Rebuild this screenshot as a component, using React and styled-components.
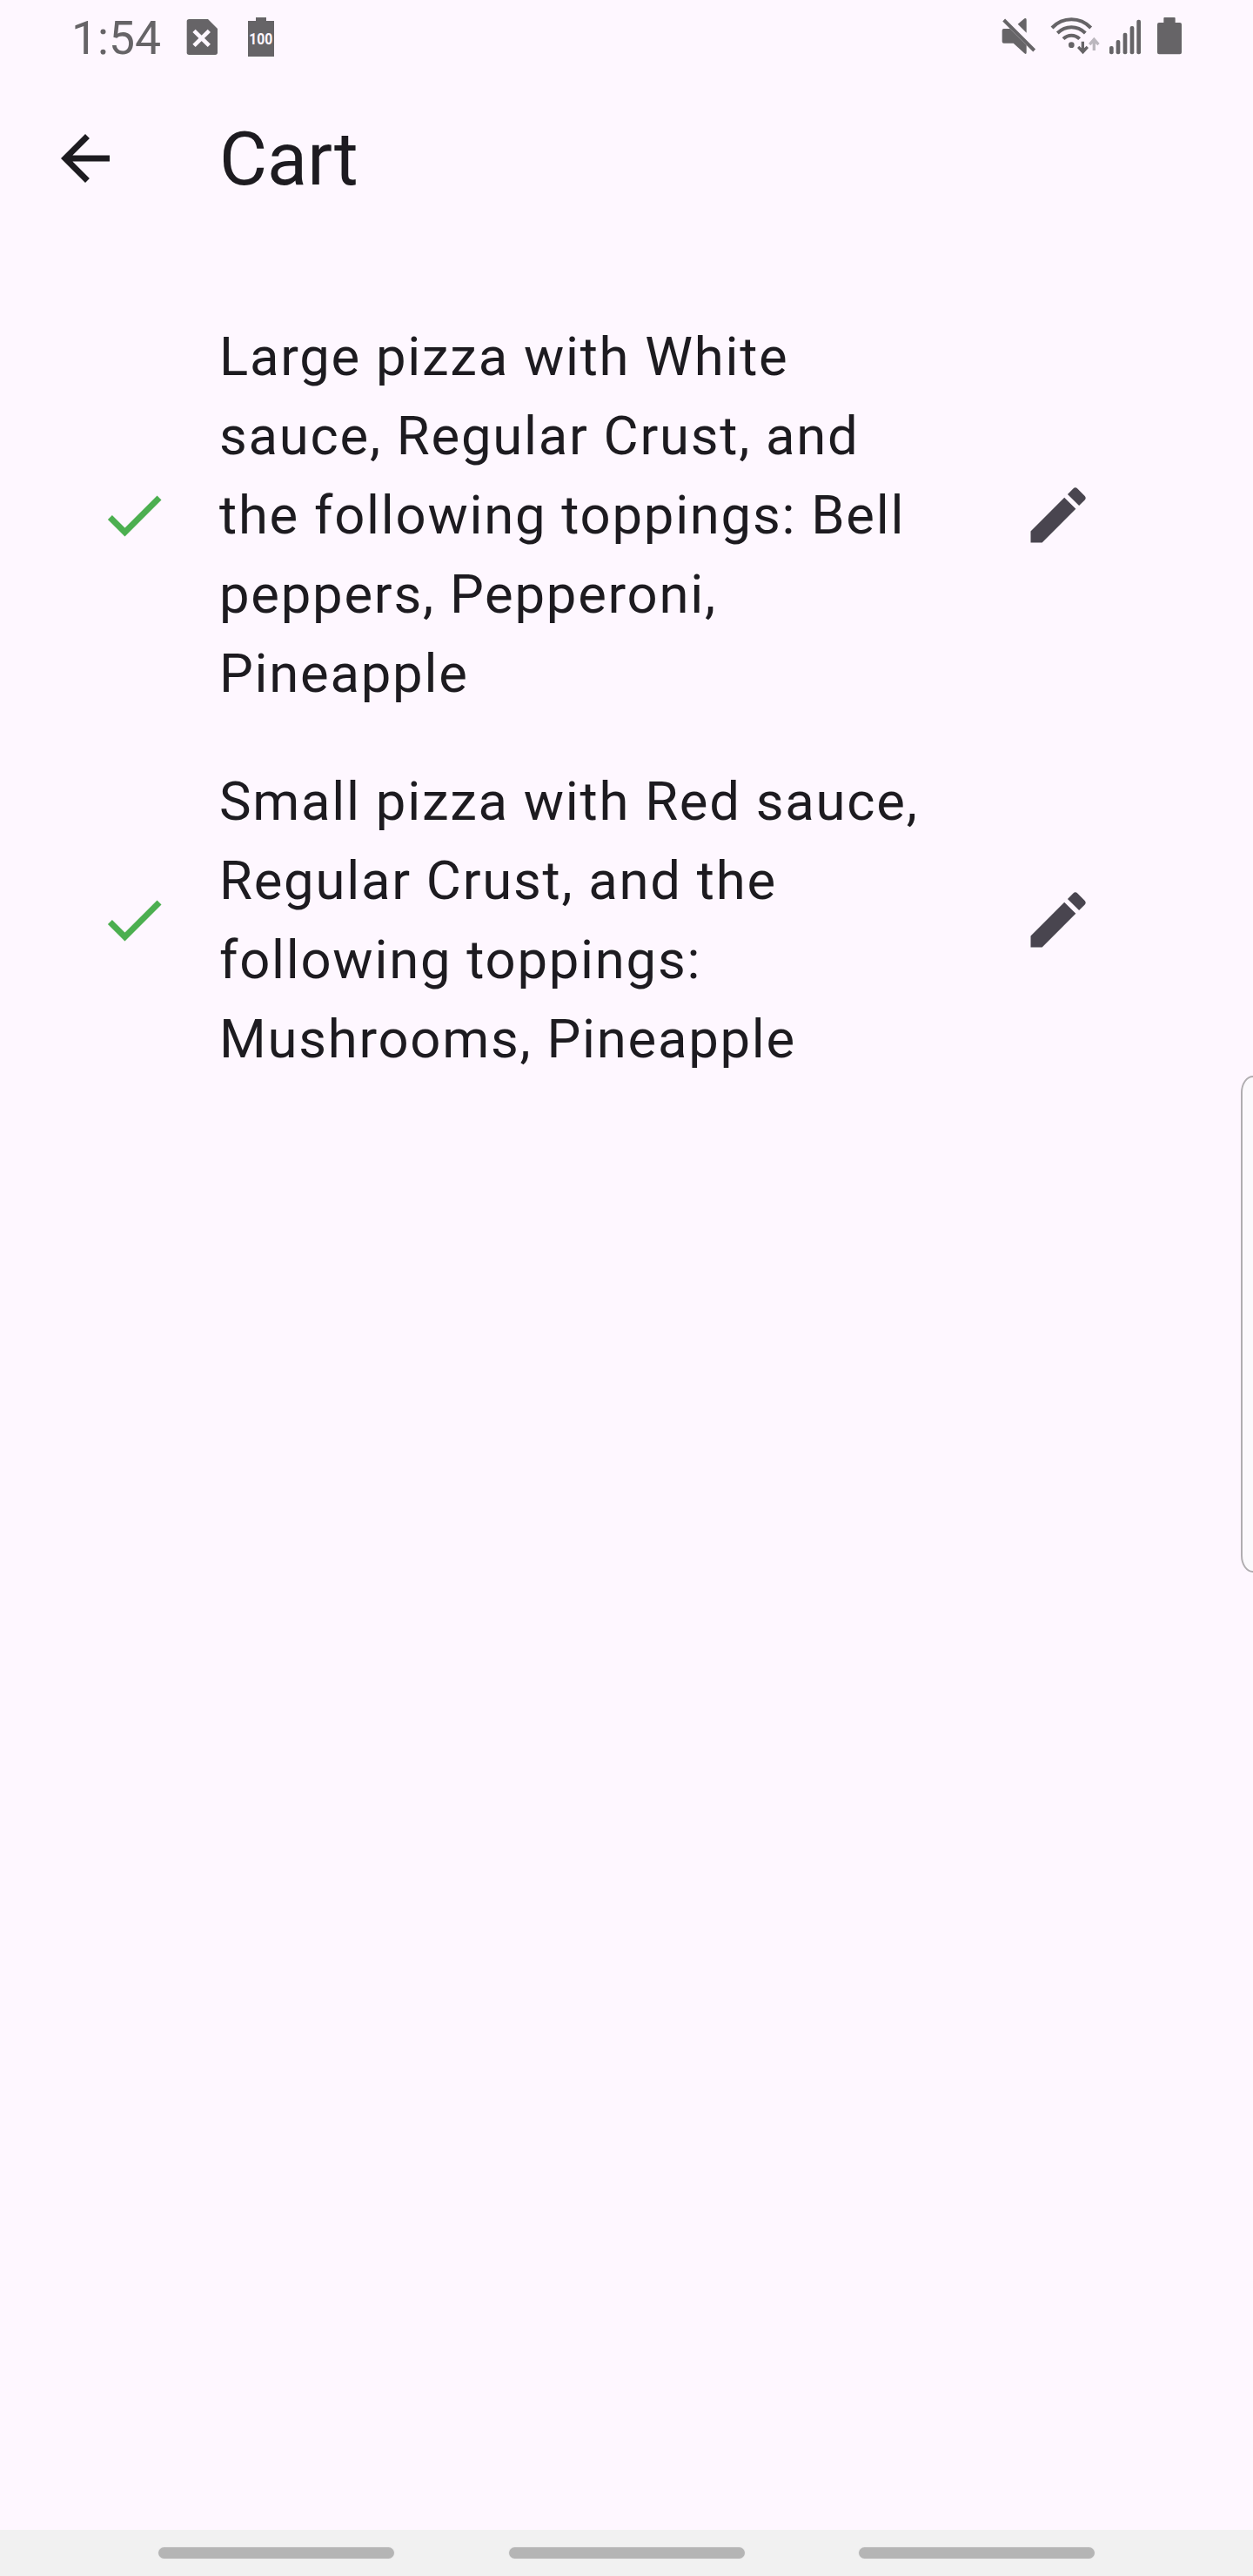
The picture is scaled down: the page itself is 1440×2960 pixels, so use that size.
import React from "react";
import styled, { createGlobalStyle } from "styled-components";

const GlobalStyle = createGlobalStyle`
  body {
    margin: 0;
    background: #fef7ff;
    font-family: Roboto, "Noto Sans", sans-serif;
  }
`;

const Screen = styled.div`
  position: relative;
  display: flex;
  flex-direction: column;
  width: 1440px;
  height: 2960px;
  overflow: hidden;
  background: #fef7ff;
  color: #1d1b20;
`;

const StatusBar = styled.header`
  display: flex;
  justify-content: space-between;
  height: 84px;
  padding: 0 78px 0 82px;
  box-sizing: border-box;
  color: #666467;
`;

const StatusGroup = styled.div`
  display: flex;

  svg {
    display: block;
  }
`;

const Clock = styled.time`
  width: 118px;
  font-size: 53.5px;
  line-height: 87px;
  white-space: nowrap;
`;

const AppBar = styled.div`
  display: flex;
  align-items: center;
  gap: 112px;
  height: 196px;
  padding: 0 56px;
`;

const BackButton = styled.button`
  display: flex;
  padding: 0;
  border: 0;
  background: none;
  color: inherit;
`;

const Title = styled.h1`
  margin: 2px 0 0;
  font-size: 84.7px;
  font-weight: 400;
  line-height: 108px;
`;

const Icon = styled.svg`
  display: block;
  flex: none;
  width: 84px;
  height: 84px;
  fill: ${(p) => p.$color || "currentColor"};
`;

const CartList = styled.ul`
  flex: 1;
  margin: 0;
  padding: 56px;
  list-style: none;
`;

const CartItem = styled.li`
  display: flex;
  align-items: center;
  padding: 28px 84px 28px 56px;
`;

const Description = styled.p`
  flex: 1;
  margin: 1px 56px -1px;
  font-size: 61.6px;
  line-height: 91px;
  letter-spacing: 1.75px;
`;

const EditButton = styled.button`
  display: flex;
  flex: none;
  align-items: center;
  justify-content: center;
  width: 168px;
  height: 168px;
  padding: 0;
  border: 0;
  background: none;
`;

const EdgeHandle = styled.div`
  position: absolute;
  top: 1236px;
  left: 1426px;
  width: 28px;
  height: 571px;
  box-sizing: border-box;
  border: 2px solid #b0adb0;
  border-radius: 16px / 22px;
  background: #fbf9fc;
`;

const NavBar = styled.footer`
  display: flex;
  align-items: center;
  justify-content: center;
  gap: 131.5px;
  height: 53px;
  background: #f1f1f1;
`;

const NavHint = styled.span`
  width: 271px;
  height: 13px;
  border-radius: 7px;
  background: #b5b5b5;
  box-shadow: 0 0 0 1px #ececec;
`;

const items = [
  "Large pizza with White sauce, Regular Crust, and the following toppings: Bell peppers, Pepperoni, Pineapple",
  "Small pizza with Red sauce, Regular Crust, and the following toppings: Mushrooms, Pineapple",
];

function NotificationIcons() {
  return (
    <svg width="120" height="84" viewBox="420 0 360 252" fill="currentColor">
      <path d="M472 66H537L570 99V181Q570 189 562 189H472Q464 189 464 181V74Q464 66 472 66Z" />
      <path d="M489 106 541 157M541 106 489 157" stroke="#fef7ff" strokeWidth="14" />
      <path d="M702 60H738V72H765V195H675V72H702Z" />
      <text
        x="679"
        y="153"
        fill="#fef7ff"
        fontSize="54"
        fontWeight="700"
        textLength="81"
        lengthAdjust="spacingAndGlyphs"
      >
        100
      </text>
    </svg>
  );
}

function SystemIcons() {
  return (
    <svg width="212" height="84" viewBox="60 0 636 252" fill="currentColor">
      <path d="M65 105Q65 99 71 99H92L149 156V181Q149 189 142 184L104 149H71Q65 149 65 143Z" />
      <path d="M119 83 142 64Q149 60 149 68V113Z" />
      <path d="M71 69 176 174" stroke="currentColor" strokeWidth="12" />
      <g fill="none" stroke="currentColor" strokeWidth="12">
        <path d="M237 96Q265 67 304 67T371 96" />
        <path d="M256 114Q277 94 304 94T352 114" />
        <path d="M276 134Q288 122 304 122T332 134" />
      </g>
      <circle cx="304" cy="155" r="10" />
      <path d="M338 143H348V166L356 158L363 165L343.500 187L324 165L331 158L338 166Z" />
      <path
        d="M377 174H387V150L394 157L401 150L382 128L363 150L370 157L377 150Z"
        fill="#bbb7be"
      />
      <rect x="435" y="159" width="14" height="28" rx="6" />
      <rect x="458" y="138" width="14" height="49" rx="6" />
      <rect x="482" y="113" width="14" height="74" rx="6" />
      <rect x="506" y="90" width="14" height="97" rx="6" />
      <rect x="529" y="68" width="14" height="119" rx="6" />
      <path d="M625 60H659Q662 60 662 63V78H678Q684 78 684 84V181Q684 187 678 187H606Q600 187 600 181V84Q600 78 606 78H622V63Q622 60 625 60Z" />
    </svg>
  );
}

export default function App() {
  return (
    <>
      <GlobalStyle />
      <Screen>
        <StatusBar>
          <StatusGroup>
            <Clock>1:54</Clock>
            <NotificationIcons />
          </StatusGroup>
          <StatusGroup>
            <SystemIcons />
          </StatusGroup>
        </StatusBar>
        <AppBar>
          <BackButton aria-label="Back">
            <Icon viewBox="0 0 24 24">
              <path d="M20 11H7.830l5.590-5.590L12 4l-8 8 8 8 1.410-1.410L7.830 13H20v-2z" />
            </Icon>
          </BackButton>
          <Title>Cart</Title>
        </AppBar>
        <CartList>
          {items.map((text) => (
            <CartItem key={text}>
              <Icon viewBox="0 0 24 24" $color="#4caf50">
                <path d="M9 16.170L4.830 12l-1.420 1.410L9 19 21 7l-1.410-1.410z" />
              </Icon>
              <Description>{text}</Description>
              <EditButton aria-label="Edit">
                <Icon viewBox="0 0 24 24" $color="#49454f">
                  <path d="M3 17.250V21h3.750L17.810 9.940l-3.750-3.750L3 17.250zM20.710 7.040a1 1 0 0 0 0-1.410l-2.340-2.340a1 1 0 0 0-1.410 0l-1.830 1.830 3.750 3.750 1.830-1.830z" />
                </Icon>
              </EditButton>
            </CartItem>
          ))}
        </CartList>
        <EdgeHandle />
        <NavBar>
          <NavHint />
          <NavHint />
          <NavHint />
        </NavBar>
      </Screen>
    </>
  );
}
